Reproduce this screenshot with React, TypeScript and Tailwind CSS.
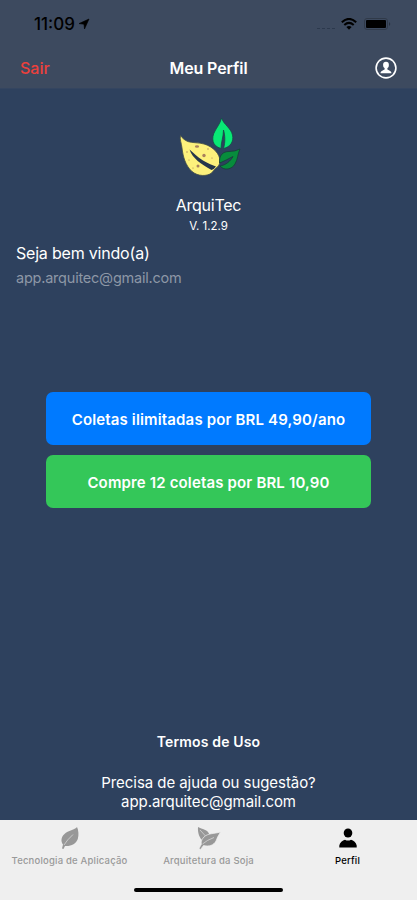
import React, { useState } from 'react';

interface IconProps {
  className?: string;
}

const LocationIcon: React.FC<IconProps> = ({ className }) => (
  <svg viewBox="0 0 12 12" fill="currentColor" className={className} aria-hidden="true">
    <path d="M11 1 1 5.6 6 6.2 6.5 11Z" stroke="currentColor" strokeWidth="0.6" strokeLinejoin="round" />
  </svg>
);

const WifiIcon: React.FC<IconProps> = ({ className }) => (
  <svg viewBox="0 0 16 12" fill="none" stroke="currentColor" strokeWidth="2" className={className} aria-hidden="true">
    <path d="M.8 4.2Q8-2.4 15.2 4.2" />
    <path d="M3.3 7Q8 2.8 12.7 7" />
    <path d="M5.4 9.1Q8 6.8 10.6 9.1L8 11.8Z" fill="currentColor" stroke="none" />
  </svg>
);

const BatteryIcon: React.FC<IconProps> = ({ className }) => (
  <svg viewBox="0 0 27 12" className={className} aria-hidden="true">
    <rect x="0.5" y="0.5" width="23" height="11" rx="2.5" fill="none" stroke="#303a49" />
    <rect x="2" y="2" width="20" height="8" rx="1" fill="#000" />
    <path d="M25 4Q27.5 6 25 8Z" fill="#283241" />
  </svg>
);

const UserCircleIcon: React.FC<IconProps> = ({ className }) => (
  <svg viewBox="0 0 22 22" className={className} aria-hidden="true">
    <circle cx="11" cy="11" r="9.9" fill="none" stroke="currentColor" strokeWidth="1.6" />
    <ellipse cx="11" cy="7.9" rx="2.9" ry="3.2" fill="currentColor" />
    <path d="M5.5 16.2C5.5 13.7 8.5 13.2 9.6 12.4V10H12.4V12.4C13.5 13.2 16.5 13.7 16.5 16.2Z" fill="currentColor" />
  </svg>
);

const Logo: React.FC<IconProps> = ({ className }) => (
  <svg viewBox="0 0 64 62" className={className} aria-hidden="true">
    {/* grain */}
    <path
      d="M3.5 19.5C5 22 8 24.5 11 25.6C15 27 22 26.5 27 28C36 30.5 43 38 43 45C43 48 41.500 50.500 38.500 52.500L34.500 57C30 60.500 21 60.500 15 55.500C8 49 6 40 5 32C4.500 27 2.500 23.500 3.500 19.500Z"
      fill="#fdf17c"
      stroke="#424d48"
      strokeWidth="0.8"
    />
    <path d="M12.500 33.500C17 37 20 41 26 44.500C31 47.500 36 49.500 39 50.500Q37.500 53 34.500 54C24 48 15.500 42.500 12.500 33.500Z" fill="#25364b" />
    <g fill="#a9805c">
      <ellipse cx="20" cy="30.5" rx="2.1" ry="1.3" />
      <circle cx="27" cy="39.5" r="1.7" />
      <circle cx="21" cy="50" r="1.5" />
      <circle cx="10" cy="36" r="0.7" />
      <circle cx="12" cy="44" r="0.6" />
      <circle cx="31" cy="33" r="0.7" />
      <circle cx="16" cy="52" r="0.6" />
      <circle cx="35" cy="42" r="0.6" />
    </g>
    {/* leaves */}
    <path
      d="M44 32.5C35 30 34 22 38 15C40 11 43 8 44.5 2C47 9 54 12 55.5 19C57 26 53 31 46.5 32.5C48.5 26 48 19 46.5 14C46.5 21 44 26 44 32.5Z"
      fill="#08e875"
      stroke="#174a46"
      strokeWidth="0.8"
    />
    <path
      d="M42.5 47C42 39 46 35.5 52 35.5Q58 35.5 63 33C60.5 38 61 43 58 48C55 53.5 47 55 43 50C49 49 53.5 45 56 40.5C51 43 47.5 45 42.5 47Z"
      fill="#078c3c"
      stroke="#163e38"
      strokeWidth="0.8"
    />
  </svg>
);

const LeafIcon: React.FC<IconProps> = ({ className }) => (
  <svg viewBox="0 0 20 24" className={className} aria-hidden="true">
    <path
      d="M17 1C15 4 8 4.5 4.5 8C0.5 11.5 1 16 3 18.5L2 22.5L3.5 23L5 20C11 20.5 16 18 17.8 13C19 9 18.5 4 17 1Z"
      fill="#989898"
    />
    <path d="M4 19Q7 14 13 8.5" fill="none" stroke="#e0e0e0" strokeWidth="0.7" />
  </svg>
);

const SproutIcon: React.FC<IconProps> = ({ className }) => (
  <svg viewBox="0 0 24 24" className={className} aria-hidden="true">
    <path d="M1 1C5 3.5 11 3 12.5 9L6 15C2.5 12 0.5 7 1 1Z" fill="#989898" />
    <path
      d="M23.5 6C17 8 11 7 7 11C4 14 4 17 4.5 18L2 22.5L3.5 23.5L6.5 19.5C12 21 17 19 19 15Q20.5 10.5 23.5 6Z"
      fill="#989898"
      stroke="#efefef"
      strokeWidth="0.7"
    />
    <path d="M3 4 8.5 10M5.5 18Q10 14 17 11.5" fill="none" stroke="#dedede" strokeWidth="0.7" />
  </svg>
);

const PersonIcon: React.FC<IconProps> = ({ className }) => (
  <svg viewBox="0 0 18 20" fill="currentColor" className={className} aria-hidden="true">
    <ellipse cx="9" cy="5" rx="4.3" ry="4.6" />
    <path d="M.3 19.5V17.5C.7 14.5 3.5 12.5 6 11.7Q9 13.5 12 11.7C14.5 12.5 17.3 14.5 17.7 17.5V19.5Z" />
  </svg>
);

const tabs = [
  { label: 'Tecnologia de Aplicação', Icon: LeafIcon, icon: 'h-6 w-5' },
  { label: 'Arquitetura da Soja', Icon: SproutIcon, icon: 'size-6' },
  { label: 'Perfil', Icon: PersonIcon, icon: 'h-5 w-[18px]' },
];

const App: React.FC = () => {
  const [activeTab, setActiveTab] = useState('Perfil');

  return (
    <div className="flex h-[900px] w-[417px] flex-col overflow-hidden bg-[#2e415e] font-['Inter',sans-serif] text-white">
      <header className="h-[89px] shrink-0 border-b border-[#344560] bg-[#3d4a5f]">
        <div className="flex h-12 items-center justify-between pr-[26px] pl-[34px] text-black">
          <div className="flex items-center gap-[3px]">
            <span className="pt-0.5 text-[17px] font-medium">11:09</span>
            <LocationIcon className="size-3" />
          </div>
          <div className="flex items-center">
            <div className="mt-2 mr-1.5 flex gap-0.5">
              {[0, 1, 2, 3].map((dot) => (
                <span key={dot} className="h-px w-[3px] bg-[#2c394d]" />
              ))}
            </div>
            <WifiIcon className="mr-[7px] h-3 w-4" />
            <BatteryIcon className="h-3 w-[27px]" />
          </div>
        </div>
        <div className="grid h-10 grid-cols-[1fr_auto_1fr] items-center px-5">
          <button className="justify-self-start text-[16px] font-medium text-[#ec403c]">Sair</button>
          <h1 className="text-[16px] font-semibold tracking-[-0.1px]">Meu Perfil</h1>
          <button aria-label="Conta" className="justify-self-end">
            <UserCircleIcon className="size-[22px]" />
          </button>
        </div>
      </header>

      <main className="flex min-h-0 flex-1 flex-col">
        <div className="flex flex-col items-center pt-[27px]">
          <Logo className="h-[62px] w-16" />
          <p className="mt-[15px] text-[16px] leading-6 tracking-[-0.25px]">ArquiTec</p>
          <p className="text-[11.5px] leading-[18px]">V. 1.2.9</p>
        </div>
        <div className="mt-1.5 px-4">
          <p className="text-[16px] leading-6 tracking-[-0.2px]">Seja bem vindo(a)</p>
          <p className="text-[14.5px] leading-[26px] tracking-[-0.22px] text-[#8d97a6]">app.arquitec@gmail.com</p>
        </div>

        <div className="mt-[101px] flex flex-col gap-2.5 px-[46px] text-[15px] font-semibold tracking-[0.15px]">
          <button className="h-[53px] rounded-[7px] bg-[#007aff] pt-[3px]">Coletas ilimitadas por BRL 49,90/ano</button>
          <button className="h-[53px] rounded-[7px] bg-[#34c759] pt-[3px]">Compre 12 coletas por BRL 10,90</button>
        </div>

        <div className="mt-auto pb-[9px] text-center">
          <button className="text-[14px] leading-5 font-semibold tracking-[0.15px]">Termos de Uso</button>
          <p className="mt-5 text-[15px] leading-[19px] tracking-[-0.06px]">
            Precisa de ajuda ou sugestão?
            <br />
            app.arquitec@gmail.com
          </p>
        </div>
      </main>

      <footer className="h-20 shrink-0 bg-[#efefef]">
        <nav className="grid h-[68px] grid-cols-3">
          {tabs.map(({ label, Icon, icon }) => (
            <button
              key={label}
              onClick={() => setActiveTab(label)}
              className={`flex flex-col items-center pt-1.5 text-[9.5px] font-medium tracking-[0.2px] whitespace-nowrap ${
                activeTab === label ? 'text-black' : 'text-[#999]'
              }`}
            >
              <span className="flex h-6 items-center">
                <Icon className={icon} />
              </span>
              <span className="mt-[5px] leading-3">{label}</span>
            </button>
          ))}
        </nav>
        <div className="mx-auto h-1 w-[149px] rounded-full bg-black" />
      </footer>
    </div>
  );
};

export default App;
